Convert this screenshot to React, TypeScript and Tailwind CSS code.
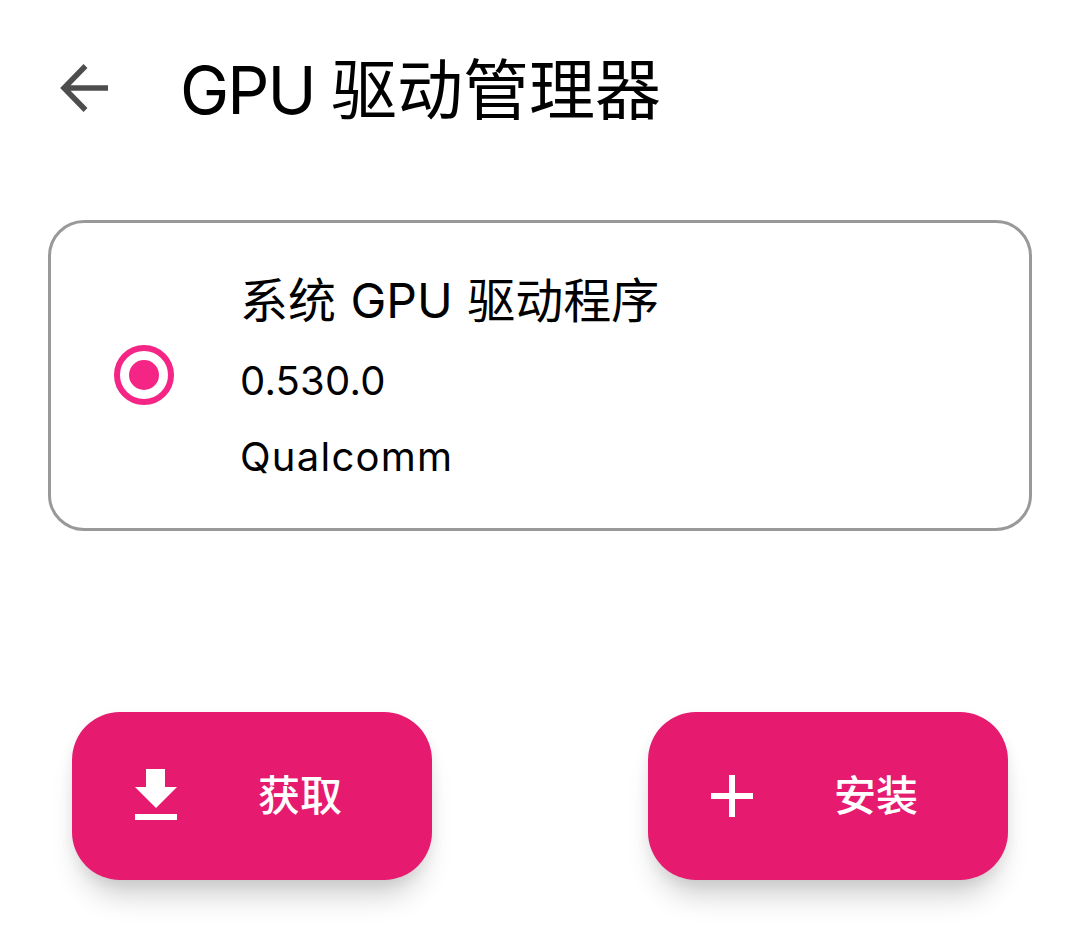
import React from "react";

const font = "font-['Inter','Noto_Sans_CJK_SC',sans-serif]";

function ActionButton({ icon, label }: { icon: React.ReactNode; label: string }) {
  return (
    <div className="flex h-[168px] w-[360px] items-center rounded-[48px] bg-[#e61b70] pl-[60px] shadow-[0_24px_30px_-10px_rgba(0,0,0,0.2),0_4px_14px_rgba(0,0,0,0.06)]">
      <div className="flex h-[48px] w-[48px] shrink-0 items-center justify-center">{icon}</div>
      <span className="ml-[78px] text-[42px] font-medium leading-[48px] text-white">{label}</span>
    </div>
  );
}

export default function App() {
  return (
    <div className={`${font} h-[952px] w-[1080px] overflow-hidden bg-white`}>
      <header className="flex h-[180px] items-center pb-[4px] pl-[60px]">
        <svg width="48" height="48" viewBox="0 0 48 48" className="shrink-0">
          <path d="M48 24H4M25.5 2L4 24l21.5 22" fill="none" stroke="#4d4d4d" strokeWidth="5.5" />
        </svg>
        <h1 className="ml-[72px] mt-[4px] text-[66px] font-normal leading-[80px] text-black">
          <span className="tracking-[-2px]">GPU </span>驱动管理器
        </h1>
      </header>
      <main className="mx-[48px] mt-[40px] flex h-[311px] items-center rounded-[36px] border-[3px] border-[#999999]">
        <div className="mb-[2px] ml-[63px] flex h-[60px] w-[60px] shrink-0 items-center justify-center rounded-full border-[6px] border-[#f42585]">
          <div className="h-[30px] w-[30px] rounded-full bg-[#f42585]" />
        </div>
        <div className="ml-[66px] flex flex-col pt-[3px]">
          <div className="text-[48px] font-normal leading-[64px] text-black [word-spacing:1px]">系统 GPU 驱动程序</div>
          <div className="mt-[20px] text-[40px] leading-[56px] tracking-[0.2px] text-black">0.530.0</div>
          <div className="mt-[20px] text-[40px] leading-[56px] tracking-[1.25px] text-black">Qualcomm</div>
        </div>
      </main>
      <div className="mx-[72px] mt-[181px] flex justify-between">
        <ActionButton
          label="获取"
          icon={
            <svg width="48" height="54" viewBox="0 -3 48 54" fill="white" className="shrink-0">
              <path d="M14 -3h19v18h12L24 36 3 15h11z" />
              <rect x="3" y="42" width="42" height="6" />
            </svg>
          }
        />
        <ActionButton
          label="安装"
          icon={
            <svg width="48" height="48" viewBox="0 0 48 48" fill="white">
              <path d="M21 3h6v18h18v6H27v18h-6V27H3v-6h18z" />
            </svg>
          }
        />
      </div>
    </div>
  );
}
